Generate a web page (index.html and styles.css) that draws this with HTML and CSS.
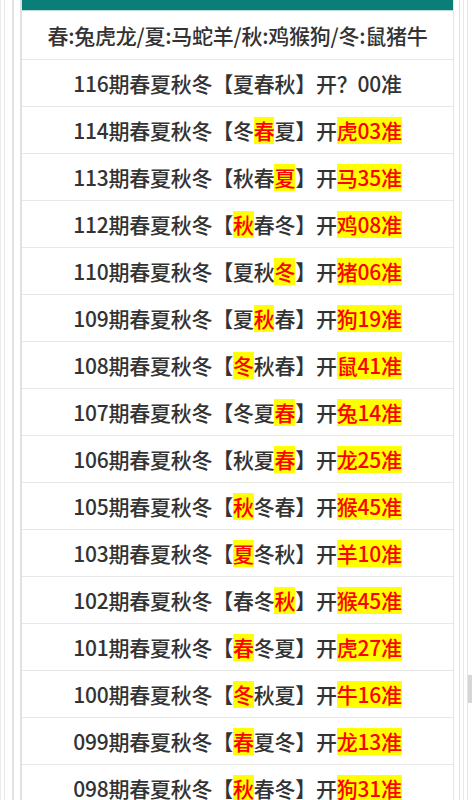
FILE: index.html
```html
<!DOCTYPE html>
<html lang="zh-CN">
<head>
<meta charset="utf-8">
<link rel="stylesheet" href="styles.css">
</head>
<body>
<div class="frame1">
  <div class="frame2">
    <div class="frame3">
      <div class="table">
        <div class="topbar"></div>
        <div class="row legend">春:兔虎龙/夏:马蛇羊/秋:鸡猴狗/冬:鼠猪牛</div>
        <div class="row">116期春夏秋冬【夏春秋】开？00准</div>
        <div class="row">114期春夏秋冬【冬<span class="hl">春</span>夏】开<span class="hl">虎03准</span></div>
        <div class="row">113期春夏秋冬【秋春<span class="hl">夏</span>】开<span class="hl">马35准</span></div>
        <div class="row">112期春夏秋冬【<span class="hl">秋</span>春冬】开<span class="hl">鸡08准</span></div>
        <div class="row">110期春夏秋冬【夏秋<span class="hl">冬</span>】开<span class="hl">猪06准</span></div>
        <div class="row">109期春夏秋冬【夏<span class="hl">秋</span>春】开<span class="hl">狗19准</span></div>
        <div class="row">108期春夏秋冬【<span class="hl">冬</span>秋春】开<span class="hl">鼠41准</span></div>
        <div class="row">107期春夏秋冬【冬夏<span class="hl">春</span>】开<span class="hl">兔14准</span></div>
        <div class="row">106期春夏秋冬【秋夏<span class="hl">春</span>】开<span class="hl">龙25准</span></div>
        <div class="row">105期春夏秋冬【<span class="hl">秋</span>冬春】开<span class="hl">猴45准</span></div>
        <div class="row">103期春夏秋冬【<span class="hl">夏</span>冬秋】开<span class="hl">羊10准</span></div>
        <div class="row">102期春夏秋冬【春冬<span class="hl">秋</span>】开<span class="hl">猴45准</span></div>
        <div class="row">101期春夏秋冬【<span class="hl">春</span>冬夏】开<span class="hl">虎27准</span></div>
        <div class="row">100期春夏秋冬【<span class="hl">冬</span>秋夏】开<span class="hl">牛16准</span></div>
        <div class="row">099期春夏秋冬【<span class="hl">春</span>夏冬】开<span class="hl">龙13准</span></div>
        <div class="row">098期春夏秋冬【<span class="hl">秋</span>春冬】开<span class="hl">狗31准</span></div>
      </div>
    </div>
  </div>
</div>
<div class="scrollthumb"></div>
</body>
</html>
```

FILE: styles.css
```css
html, body {
  margin: 0;
  padding: 0;
  background: #ffffff;
}
body {
  width: 472px;
  height: 800px;
  overflow: hidden;
  font-family: "Noto Sans CJK SC", "Noto Sans", sans-serif;
}
.frame1 {
  width: 468px;
  box-sizing: border-box;
  border-left: 1px solid #ececec;
  border-right: 1px solid #e6e6e6;
  padding: 0 3px;
}
.frame2 {
  box-sizing: border-box;
  border-left: 1px solid #e8e8e8;
  border-right: 1px solid #e6e6e6;
  padding: 0 3px 0 7px;
}
.frame3 {
  box-sizing: border-box;
  border-left: 2px solid #e2e2e2;
  border-right: 1px solid #e4e4e4;
  padding: 0 5px 0 6px;
}
.table {
  box-sizing: border-box;
  border-left: 2px solid #e0e0e0;
  border-right: 1px solid #e4e4e4;
}
.topbar {
  height: 10px;
  background: #0a7f77;
  border-bottom: 1px solid #b9dcd9;
}
.row {
  height: 46px;
  border-bottom: 1px solid #e8e8e8;
  display: flex;
  align-items: center;
  justify-content: center;
  font-size: 21px;
  font-weight: 500;
  letter-spacing: -0.25px;
  color: #333333;
  white-space: nowrap;
}
.row.legend {
  height: 48px;
}
.hl {
  display: inline-block;
  height: 27px;
  line-height: 27px;
  background: #ffff00;
  color: #ff0000;
}
.scrollthumb {
  position: absolute;
  left: 468px;
  top: 675px;
  width: 4px;
  height: 28px;
  background: #d6d6d6;
}
```
